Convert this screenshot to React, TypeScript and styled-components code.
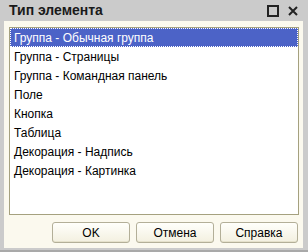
import React from "react";
import styled, { createGlobalStyle } from "styled-components";

const Global = createGlobalStyle`
  html, body { margin: 0; padding: 0; background: #cbcbcb; }
  * { box-sizing: border-box; }
`;

const Window = styled.div`
  width: 308px;
  height: 252px;
  background: #cbcbcb;
  display: flex;
  flex-direction: column;
  padding: 0 5px 0 4px;
  font-family: "Liberation Sans", Arial, sans-serif;
  color: #000;
  box-shadow: inset 0 -2px 0 #a9a9a9;
`;

const TitleBar = styled.div`
  height: 21px;
  display: flex;
  align-items: center;
  padding-left: 5px;
  padding-right: 5px;
  font-weight: bold;
  font-size: 14px;
  color: #1a1a1a;
`;

const Title = styled.div`
  flex: 1;
  padding-bottom: 1px;
`;

const TitleButton = styled.div<{ $w: number }>`
  width: ${(p) => p.$w}px;
  height: 12px;
  margin-left: 9px;
  flex: none;
  display: flex;
  align-items: center;
  justify-content: center;
`;

const Body = styled.div`
  background: #fbf9ee;
  height: 227px;
  display: flex;
  flex-direction: column;
  padding: 6px 4px 0 5px;
`;

const List = styled.div`
  height: 188px;
  border: 1px solid #a5a17f;
  background: #ffffff;
  display: flex;
  flex-direction: column;
`;

const Row = styled.div<{ $selected?: boolean }>`
  height: 19px;
  flex: none;
  display: flex;
  align-items: center;
  padding-left: 3px;
  font-size: 12px;
  color: ${(p) => (p.$selected ? "#ffffff" : "#000000")};
  background: ${(p) => (p.$selected ? "#4c63c7" : "transparent")};
  border: 1px ${(p) => (p.$selected ? "dotted #ffffff" : "solid transparent")};
`;

const Buttons = styled.div`
  display: flex;
  justify-content: flex-end;
  gap: 6px;
  padding-top: 7px;
  padding-right: 1px;
`;

const Button = styled.button`
  width: 78px;
  height: 21px;
  border: 1px solid #b3af98;
  border-radius: 3px;
  background: linear-gradient(#fffffb, #f3f0e0);
  box-shadow: inset 0 -1px 0 #e6e2cc;
  font-family: "Liberation Sans", Arial, sans-serif;
  font-size: 12px;
  color: #000;
  padding: 0;
`;

const items = [
  "Группа - Обычная группа",
  "Группа - Страницы",
  "Группа - Командная панель",
  "Поле",
  "Кнопка",
  "Таблица",
  "Декорация - Надпись",
  "Декорация - Картинка",
];

export default function App() {
  return (
    <>
      <Global />
      <Window>
        <TitleBar>
          <Title>Тип элемента</Title>
          <TitleButton $w={12}>
            <svg width="12" height="12" viewBox="0 0 12 12">
              <rect x="1" y="1" width="10" height="10" fill="none" stroke="#222" strokeWidth="2" />
            </svg>
          </TitleButton>
          <TitleButton $w={10}>
            <svg width="10" height="10" viewBox="0 0 10 10">
              <path d="M1 1 L9 9 M9 1 L1 9" stroke="#222" strokeWidth="2" />
            </svg>
          </TitleButton>
        </TitleBar>
        <Body>
          <List>
            {items.map((t, i) => (
              <Row key={t} $selected={i === 0}>
                {t}
              </Row>
            ))}
          </List>
          <Buttons>
            <Button>OK</Button>
            <Button>Отмена</Button>
            <Button>Справка</Button>
          </Buttons>
        </Body>
      </Window>
    </>
  );
}
